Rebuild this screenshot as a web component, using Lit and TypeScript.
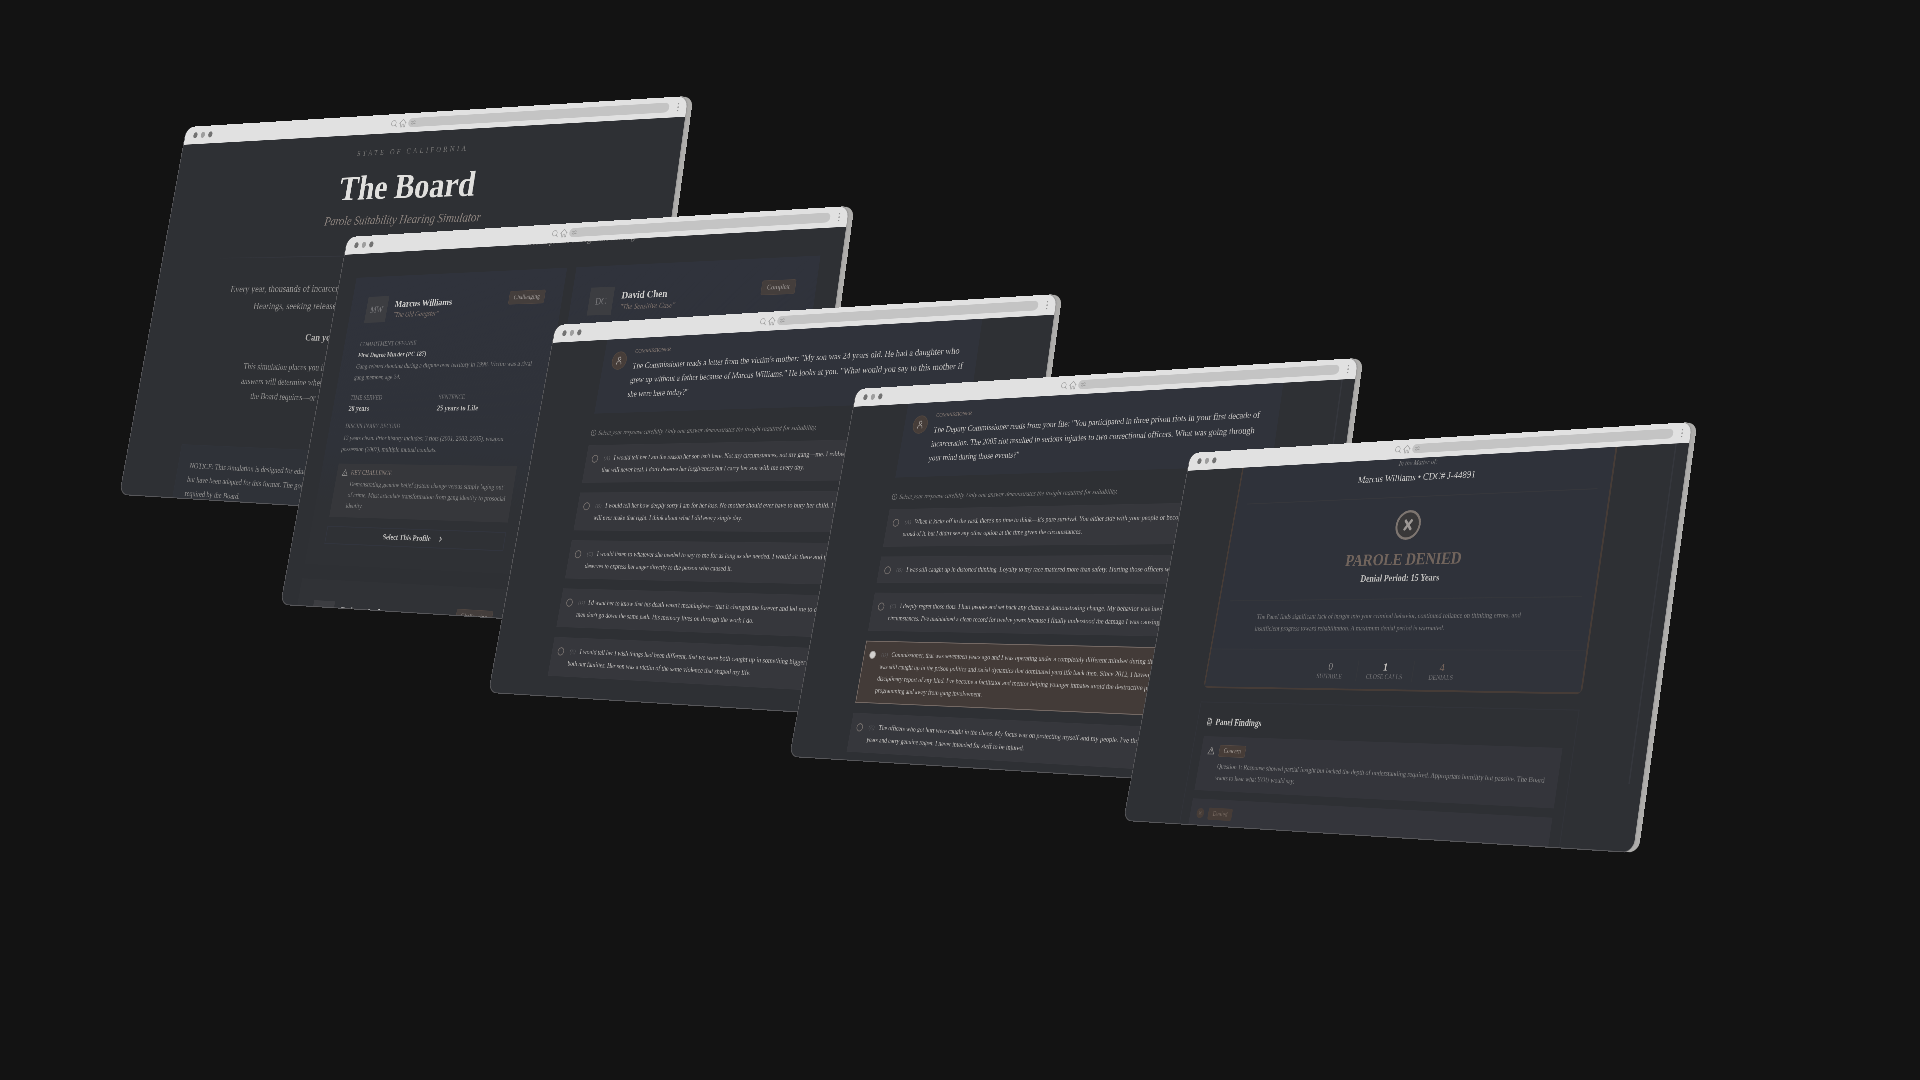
import { LitElement, html, svg, css, nothing } from "lit";
import { customElement, property } from "lit/decorators.js";

type Point = [number, number];

interface Choice {
  letter: string;
  lines: string[];
  selected?: boolean;
}

interface Profile {
  initials: string;
  name: string;
  nickname: string;
  level: string;
  full?: boolean;
}

/* Natural size of every browser window before it is tilted. */
const WINDOW_WIDTH = 1280;
const WINDOW_HEIGHT = 840;

/* Corners of a tilted window, clockwise from the top left. */
const TILT: [Point, Point, Point, Point] = [
  [0, 0],
  [501, -31],
  [442, 399],
  [-67, 367],
];

/* Projects the window rectangle onto the four corners. */
function project([p0, p1, p2, p3]: [Point, Point, Point, Point]): string {
  const dx1 = p1[0] - p2[0];
  const dx2 = p3[0] - p2[0];
  const sx = p0[0] - p1[0] + p2[0] - p3[0];
  const dy1 = p1[1] - p2[1];
  const dy2 = p3[1] - p2[1];
  const sy = p0[1] - p1[1] + p2[1] - p3[1];
  const det = dx1 * dy2 - dx2 * dy1;
  const g = (sx * dy2 - dx2 * sy) / det;
  const h = (dx1 * sy - sx * dy1) / det;
  const a = p1[0] - p0[0] + g * p1[0];
  const b = p3[0] - p0[0] + h * p3[0];
  const d = p1[1] - p0[1] + g * p1[1];
  const e = p3[1] - p0[1] + h * p3[1];
  const w = WINDOW_WIDTH;
  const t = WINDOW_HEIGHT;
  return `matrix3d(${[
    a / w, d / w, 0, g / w,
    b / t, e / t, 0, h / t,
    0, 0, 1, 0,
    p0[0], p0[1], 0, 1,
  ].join(",")})`;
}

const TILT_MATRIX = project(TILT);

/* Where each window's top left corner sits on a 1920 x 1080 stage. */
const PLACES: Point[] = [
  [187, 127],
  [348, 237],
  [556, 325],
  [857, 389],
  [1191, 453],
];

const rows = (lines: string[]) => lines.map((line) => html`<span class="row">${line}</span>`);

const icon = (body: unknown, size = 18) => html`<svg
  class="icon"
  width=${size}
  height=${size}
  viewBox="0 0 24 24"
  fill="none"
  stroke="currentColor"
  stroke-width="2"
  stroke-linecap="round"
  stroke-linejoin="round"
  aria-hidden="true"
>${body}</svg>`;

const SEARCH = svg`<circle cx="11" cy="11" r="8"/><path d="M17 17l5 5"/>`;
const HOME = svg`<path d="M2 12L12 2l10 10M5 10v12h5v-7h4v7h5V10"/>`;
const TUNE = svg`<path d="M3 8h10M19 8h2M3 16h2M11 16h10"/><circle cx="16" cy="8" r="3"/><circle cx="8" cy="16" r="3"/>`;
const PERSON = svg`<circle cx="12" cy="7" r="4"/><path d="M5 21v-1a7 7 0 0 1 14 0v1"/>`;
const WARNING = svg`<path d="M12 3L2 21h20L12 3zM12 10v5M12 18v.1"/>`;
const INFO = svg`<circle cx="12" cy="12" r="10"/><path d="M12 7v6M12 17v.1"/>`;
const CROSS = svg`<path d="M7 7l10 10M17 7L7 17"/>`;
const SEAL_CROSS = svg`<path stroke-width="4" d="M7 6l10 12M17 6L7 18"/>`;
const DOC = svg`<path d="M14 2H5v20h14V7l-5-5zM14 2v5h5M8 13h8M8 17h8M8 9h2"/>`;
const CHEVRON = svg`<path stroke-width="3" d="M9 5l7 7-7 7"/>`;

const shared = css`
  * {
    box-sizing: border-box;
  }
  p,
  h1,
  h2,
  h3,
  ul,
  dl,
  dd {
    margin: 0;
    padding: 0;
  }
  .row {
    display: block;
    white-space: nowrap;
  }
  .icon {
    display: block;
    flex: none;
  }
`;

@customElement("browser-window")
export class BrowserWindow extends LitElement {
  @property({ type: Boolean, reflect: true }) rail = false;

  static styles = [
    shared,
    css`
      :host {
        display: flex;
        flex-direction: column;
        overflow: hidden;
        border-radius: 22px;
        background: #2e3034;
        color: #8d8c8b;
        box-shadow:
          -1px 2px 0 #57575a,
          -2px 1px 0 #57575a,
          2px 0 0 #9c9b9a,
          4px 0 0 #aaa9a8,
          6px 0 0 #aeadab,
          8px 1px 0 #aeadab,
          10px 1px 0 #aeadab,
          12px 1px 0 #b2b1af;
      }
      .bar {
        flex: none;
        display: flex;
        align-items: center;
        height: 42px;
        padding: 0 17px 0 24px;
        background: #e1e1e1;
        color: #a3a3a3;
      }
      .lights {
        flex: 1;
        display: flex;
        gap: 10px;
      }
      .light {
        width: 12px;
        height: 14px;
        padding: 0;
        border: 0;
        border-radius: 50%;
        background: #727272;
      }
      .light.mid {
        background: #9f9f9f;
      }
      .tools {
        flex: none;
        display: flex;
        align-items: center;
        gap: 4px;
        width: 690px;
      }
      .address {
        flex: 1;
        display: flex;
        align-items: center;
        height: 20px;
        padding: 0 6px;
        border-radius: 10px;
        background: #c4c4c4;
        color: #9d9d9d;
      }
      .field {
        flex: 1;
        min-width: 0;
        height: 16px;
        border: 0;
        padding: 0;
        background: none;
      }
      .more {
        display: flex;
        flex-direction: column;
        gap: 4px;
        margin-left: 14px;
        padding: 0;
        border: 0;
        background: none;
      }
      .dot {
        width: 3px;
        height: 3px;
        border-radius: 50%;
        background: #8b8b8b;
      }
      .view {
        flex: 1;
        min-height: 0;
        overflow: hidden;
      }
      :host([rail]) .view {
        background: linear-gradient(#35373d, #35373d) 1250px 0 / 3px 670px no-repeat;
      }
    `,
  ];

  render() {
    return html`
      <div class="bar">
        <div class="lights">
          <button class="light" aria-label="Close"></button>
          <button class="light mid" aria-label="Minimise"></button>
          <button class="light" aria-label="Maximise"></button>
        </div>
        <div class="tools">
          ${icon(SEARCH, 18)} ${icon(HOME, 20)}
          <div class="address">
            ${icon(TUNE, 14)}
            <input class="field" type="text" aria-label="Address" />
          </div>
          <button class="more" aria-label="Menu">
            <span class="dot"></span><span class="dot"></span><span class="dot"></span>
          </button>
        </div>
      </div>
      <div class="view"><slot></slot></div>
    `;
  }
}

@customElement("intro-page")
export class IntroPage extends LitElement {
  static styles = [
    shared,
    css`
      :host {
        display: block;
        padding: 30px 152px 0;
        text-align: center;
      }
      .eyebrow {
        font-size: 16px;
        line-height: 24px;
        letter-spacing: 6px;
        color: #777675;
      }
      .title {
        margin-top: 20px;
        font-size: 76px;
        line-height: 88px;
        font-weight: 700;
        color: #e0dfdd;
      }
      .subtitle {
        margin-top: 10px;
        font-size: 27px;
        line-height: 36px;
        font-style: italic;
        color: #8b827d;
      }
      .rule {
        height: 2px;
        margin: 58px 0 50px;
        border: 0;
        background: linear-gradient(90deg, transparent, #34363d 20%, #34363d 80%, transparent);
      }
      .lead {
        font-size: 22px;
        line-height: 38px;
        color: #969493;
      }
      .question {
        margin: 33px 0;
        font-size: 22px;
        line-height: 32px;
        font-weight: 700;
        color: #b3b1af;
      }
      .detail {
        font-size: 19px;
        line-height: 32px;
        color: #929190;
      }
      .notice {
        margin-top: 94px;
        padding: 30px 32px;
        border: 1px solid #30333a;
        background: #2f3238;
        font-size: 17px;
        line-height: 30px;
        text-align: left;
        color: #929190;
      }
    `,
  ];

  render() {
    return html`
      <p class="eyebrow">STATE OF CALIFORNIA</p>
      <h1 class="title">The Board</h1>
      <p class="subtitle">Parole Suitability Hearing Simulator</p>
      <hr class="rule" />
      <p class="lead">
        ${rows([
          "Every year, thousands of incarcerated individuals in California appear before the Board of Parole",
          "Hearings, seeking release. Most of them are denied, often for reasons never said.",
        ])}
      </p>
      <p class="question">Can you find the words they need to hear?</p>
      <p class="detail">
        ${rows([
          "This simulation places you in the hearing room. You will face a series of five questions. Your",
          "answers will determine whether you demonstrate the insight, remorse and accountability that",
          "the Board requires—or whether you are sent back to your cell for another few years.",
        ])}
      </p>
      <p class="notice">
        ${rows([
          "NOTICE: This simulation is designed for educational purposes. The scenarios are based on hearings",
          "but have been adapted for this format. The goal is to teach the kind of insight that is",
          "required by the Board.",
        ])}
      </p>
    `;
  }
}

@customElement("profiles-page")
export class ProfilesPage extends LitElement {
  static styles = [
    shared,
    css`
      :host {
        display: block;
        padding: 0 48px;
      }
      .hint {
        margin: -20px 0 48px;
        font-size: 20px;
        line-height: 28px;
        text-align: center;
      }
      .grid {
        display: grid;
        grid-template-columns: 1fr 1fr;
        gap: 32px 24px;
      }
      .card {
        padding: 46px;
        background: linear-gradient(#30333c, #2f3239 60%, #2f3135 80%);
      }
      .card:nth-child(n + 3) {
        background: #303236;
      }
      .head {
        display: flex;
        align-items: center;
        gap: 20px;
      }
      .avatar {
        display: grid;
        place-items: center;
        width: 60px;
        height: 60px;
        background: #3c3d41;
        font-size: 20px;
        color: #77777a;
      }
      .who {
        flex: 1;
      }
      .name {
        font-size: 22px;
        line-height: 28px;
        font-weight: 700;
        color: #cfcecc;
      }
      .nickname {
        font-size: 16px;
        line-height: 22px;
        font-style: italic;
        color: #7d716b;
      }
      .badge {
        align-self: flex-start;
        padding: 0 12px;
        border: 1px solid #4f4540;
        border-radius: 4px;
        background: #443e3c;
        font-size: 14px;
        line-height: 28px;
        color: #9a9593;
      }
      .label {
        font-size: 14px;
        line-height: 20px;
        font-weight: 400;
        color: #757577;
      }
      .offense {
        margin-top: 40px;
      }
      .strong {
        font-size: 15px;
        line-height: 28px;
        font-weight: 700;
        color: #bdbcba;
      }
      .text {
        font-size: 15px;
        line-height: 25px;
        color: #858585;
      }
      .facts {
        display: grid;
        grid-template-columns: 1fr 1fr;
        gap: 10px;
        margin: 24px 0 16px;
      }
      .value {
        font-size: 17px;
      }
      .record {
        margin-top: 4px;
      }
      .challenge {
        margin: 20px 0;
        padding: 10px 12px 14px 14px;
        background: #36373b;
      }
      .caption {
        display: flex;
        align-items: center;
        gap: 8px;
        margin-bottom: 3px;
      }
      .challenge .label {
        color: #8f847e;
      }
      .challenge .text {
        padding-left: 28px;
        line-height: 24px;
      }
      .choose {
        display: flex;
        align-items: center;
        justify-content: center;
        gap: 18px;
        width: 100%;
        height: 40px;
        border: 2px solid #32353e;
        background: none;
        font: inherit;
        font-size: 17px;
        font-weight: 700;
        color: #bebdbb;
      }
    `,
  ];

  private profiles: Profile[] = [
    { initials: "MW", name: "Marcus Williams", nickname: "The Old Gangster", level: "Challenging", full: true },
    { initials: "DC", name: "David Chen", nickname: "The Sensitive Case", level: "Complex" },
    { initials: "RJ", name: "Robert Jackson", nickname: "The Long Road", level: "Challenging" },
  ];

  private details() {
    return html`
      <h3 class="label offense">COMMITMENT OFFENSE</h3>
      <p class="strong">First Degree Murder (PC 187)</p>
      <p class="text">
        ${rows([
          "Gang-related shooting during a dispute over territory in 1998. Victim was a rival",
          "gang member, age 24.",
        ])}
      </p>
      <dl class="facts">
        <div>
          <dt class="label">TIME SERVED</dt>
          <dd class="strong value">28 years</dd>
        </div>
        <div>
          <dt class="label">SENTENCE</dt>
          <dd class="strong value">25 years to Life</dd>
        </div>
      </dl>
      <h3 class="label">DISCIPLINARY RECORD</h3>
      <p class="text record">
        ${rows([
          "12 years clean. Prior history includes: 3 riots (2001, 2003, 2005), weapon",
          "possession (2007), multiple mutual combats.",
        ])}
      </p>
      <div class="challenge">
        <div class="caption">${icon(WARNING, 18)}<h3 class="label">KEY CHALLENGE</h3></div>
        <p class="text">
          ${rows([
            "Demonstrating genuine belief system change versus simply 'aging out'",
            "of crime. Must articulate transformation from gang identity to prosocial",
            "identity.",
          ])}
        </p>
      </div>
      <button class="choose">Select This Profile ${icon(CHEVRON, 16)}</button>
    `;
  }

  render() {
    return html`
      <p class="hint">Choose a profile to begin the hearing</p>
      <div class="grid">
        ${this.profiles.map(
          (p) => html`
            <article class="card">
              <div class="head">
                <span class="avatar">${p.initials}</span>
                <div class="who">
                  <h2 class="name">${p.name}</h2>
                  <p class="nickname">"${p.nickname}"</p>
                </div>
                <span class="badge">${p.level}</span>
              </div>
              ${p.full ? this.details() : nothing}
            </article>
          `,
        )}
      </div>
    `;
  }
}

@customElement("question-page")
export class QuestionPage extends LitElement {
  @property({ attribute: false }) message: string[] = [];
  @property({ attribute: false }) choices: Choice[] = [];

  static styles = [
    shared,
    css`
      :host {
        display: block;
        padding: 0 160px;
      }
      .message {
        display: flex;
        gap: 20px;
        padding: 21px 24px 26px;
        background: #30333b;
      }
      .avatar {
        flex: none;
        display: grid;
        place-items: center;
        width: 42px;
        height: 42px;
        margin-top: 8px;
        border: 2px solid #51463f;
        border-radius: 50%;
        background: #463d39;
        color: #a5a09d;
      }
      .speaker {
        margin-bottom: 9px;
        font-size: 13px;
        line-height: 18px;
        color: #8a7d76;
      }
      .speech {
        font-size: 19px;
        line-height: 32px;
        color: #c6c4c2;
      }
      .hint {
        display: flex;
        align-items: center;
        gap: 6px;
        margin: 32px 0 16px;
        font-size: 15px;
        line-height: 24px;
        font-style: italic;
        color: #858484;
      }
      .choices {
        display: flex;
        flex-direction: column;
        gap: 22px;
        margin: 0;
        padding: 0;
        border: 0;
      }
      .choice {
        display: flex;
        gap: 16px;
        padding: 15px;
        border: 1px solid #37383d;
        background: #36373c;
        overflow: hidden;
      }
      .choice.selected {
        border: 2px solid #746964;
        padding: 14px;
        background: #433b38;
      }
      .radio {
        appearance: none;
        flex: none;
        width: 18px;
        height: 18px;
        margin: 6px 0 0;
        border: 2px solid #77716e;
        border-radius: 50%;
      }
      .radio:checked {
        border-color: #a5a19e;
        background: #d2d0ce;
      }
      .answer {
        font-size: 15px;
        line-height: 26px;
        color: #bcbab8;
      }
      .letter {
        display: inline-block;
        width: 28px;
        font-size: 13px;
        color: #626265;
      }
    `,
  ];

  render() {
    return html`
      <section class="message">
        <span class="avatar">${icon(PERSON, 22)}</span>
        <div>
          <p class="speaker">COMMISSIONER</p>
          <p class="speech">${rows(this.message)}</p>
        </div>
      </section>
      <p class="hint">
        ${icon(INFO, 16)} Select your response carefully. Only one answer demonstrates the insight
        required for suitability.
      </p>
      <fieldset class="choices" aria-label="Responses">
        ${this.choices.map(
          (c) => html`
            <label class="choice ${c.selected ? "selected" : ""}">
              <input class="radio" type="radio" name="answer" ?checked=${c.selected} />
              <span class="answer">
                ${c.lines.map(
                  (line, i) => html`<span class="row"
                    >${i === 0 ? html`<span class="letter">(${c.letter})</span>` : nothing}${line}</span
                  >`,
                )}
              </span>
            </label>
          `,
        )}
      </fieldset>
    `;
  }
}

@customElement("verdict-page")
export class VerdictPage extends LitElement {
  static styles = [
    shared,
    css`
      :host {
        display: block;
        padding: 0 160px;
      }
      .verdict {
        display: flex;
        flex-direction: column;
        align-items: center;
        border: 4px solid #463c37;
        border-top: 0;
        border-radius: 0 0 14px 14px;
        background: #2f323a;
      }
      .matter {
        font-size: 15px;
        line-height: 20px;
        font-style: italic;
        color: #7d7d7f;
      }
      .name {
        margin-top: 6px;
        font-size: 22px;
        line-height: 32px;
        font-weight: 400;
        color: #cccbc9;
      }
      .rule {
        width: 896px;
        height: 2px;
        margin: 26px 0 28px;
        border: 0;
        background: #36373c;
      }
      .seal {
        display: grid;
        place-items: center;
        width: 64px;
        height: 64px;
        border: 5px solid #7d7570;
        border-radius: 50%;
        background: #393839;
        color: #9c9794;
      }
      .outcome {
        margin-top: 20px;
        font-size: 36px;
        line-height: 44px;
        font-weight: 700;
        color: #71645c;
      }
      .period {
        margin-top: 4px;
        font-size: 20px;
        line-height: 28px;
        font-weight: 700;
        color: #bfbebc;
      }
      .rule.low {
        margin: 30px 0 22px;
        background: #34363b;
      }
      .reason {
        width: 728px;
        font-size: 15px;
        line-height: 26px;
        color: #7b7b7c;
      }
      .stats {
        display: flex;
        align-self: stretch;
        justify-content: center;
        margin-top: 32px;
        padding: 22px 0 16px;
        border-top: 2px solid #33353b;
        background: #30333a;
      }
      .stat {
        display: flex;
        flex-direction: column;
        align-items: center;
        width: 142px;
        border-left: 2px solid #34363b;
      }
      .stat:first-child {
        border-left-color: transparent;
      }
      .count {
        font-size: 24px;
        line-height: 26px;
        color: #8a8887;
      }
      .count.close {
        font-weight: 700;
        color: #c6c2be;
      }
      .count.bad {
        color: #7d6a5f;
      }
      .tag {
        font-size: 14px;
        line-height: 18px;
        color: #707073;
      }
      .findings {
        margin-top: 30px;
        padding: 28px 24px;
        border: 2px solid #313339;
        border-bottom: 0;
      }
      .heading {
        display: flex;
        align-items: center;
        gap: 8px;
        font-size: 20px;
        line-height: 28px;
        font-weight: 700;
        color: #c3c2c0;
      }
      .finding {
        margin-top: 18px;
        padding: 18px 18px 16px;
        background: #34353b;
      }
      .top {
        display: flex;
        align-items: center;
        gap: 12px;
        color: #92908e;
      }
      .badge {
        padding: 0 12px;
        border: 1px solid #554a44;
        border-radius: 4px;
        background: #463c37;
        font-size: 14px;
        line-height: 24px;
        color: #98908b;
      }
      .badge.dim {
        border-color: #463c37;
        color: #74675f;
      }
      .round {
        display: grid;
        place-items: center;
        width: 20px;
        height: 22px;
        border-radius: 10px;
        background: #463c37;
        color: #7f736b;
      }
      .note {
        margin: 8px 0 0 34px;
        font-size: 15px;
        line-height: 25px;
        color: #838384;
      }
    `,
  ];

  render() {
    return html`
      <section class="verdict">
        <p class="matter">In the Matter of:</p>
        <h2 class="name">Marcus Williams • CDC# J-44891</h2>
        <hr class="rule" />
        <span class="seal">${icon(SEAL_CROSS, 36)}</span>
        <p class="outcome">PAROLE DENIED</p>
        <p class="period">Denial Period: 15 Years</p>
        <hr class="rule low" />
        <p class="reason">
          ${rows([
            "The Panel finds significant lack of insight into your criminal behavior, continued reliance on thinking errors, and",
            "insufficient progress toward rehabilitation. A maximum denial period is warranted.",
          ])}
        </p>
        <div class="stats">
          <div class="stat"><span class="count">0</span><span class="tag">SUITABLE</span></div>
          <div class="stat"><span class="count close">1</span><span class="tag">CLOSE CALLS</span></div>
          <div class="stat"><span class="count bad">4</span><span class="tag">DENIALS</span></div>
        </div>
      </section>
      <section class="findings">
        <h2 class="heading">${icon(DOC, 18)} Panel Findings</h2>
        <article class="finding">
          <div class="top">${icon(WARNING, 20)}<span class="badge">Concern</span></div>
          <p class="note">
            ${rows([
              "Question 1: Response showed partial insight but lacked the depth of understanding required. Appropriate humility but passive. The Board",
              "wants to hear what YOU would say.",
            ])}
          </p>
        </article>
        <article class="finding">
          <div class="top">
            <span class="round">${icon(CROSS, 14)}</span><span class="badge dim">Denied</span>
          </div>
          <p class="note">Question 2: Response did not show insight.</p>
        </article>
      </section>
    `;
  }
}

const MOTHER_MESSAGE = [
  "The Commissioner reads a letter from the victim's mother: \"My son was 24 years old. He had a daughter who",
  "grew up without a father because of Marcus Williams.\" He looks at you. \"What would you say to this mother if",
  "she were here today?\"",
];

const MOTHER_CHOICES: Choice[] = [
  {
    letter: "A",
    lines: [
      "I would tell her I am the reason her son isn't here. Not my circumstances, not my gang—me. I robbed her of a future",
      "that will never heal. I don't deserve her forgiveness but I carry her son with me every day.",
    ],
  },
  {
    letter: "B",
    lines: [
      "I would tell her how deeply sorry I am for her loss. No mother should ever have to bury her child. I took him and nothing",
      "will ever make that right. I think about what I did every single day.",
    ],
  },
  {
    letter: "C",
    lines: [
      "I would listen to whatever she needed to say to me for as long as she needed. I would sit there and take it because she",
      "deserves to express her anger directly to the person who caused it.",
    ],
  },
  {
    letter: "D",
    lines: [
      "I'd want her to know that his death wasn't meaningless—that it changed me forever and led me to dedicate my life so young",
      "men don't go down the same path. His memory lives on through the work I do.",
    ],
  },
  {
    letter: "E",
    lines: [
      "I would tell her I wish things had been different, that we were both caught up in something bigger than us that hurt",
      "both our families. Her son was a victim of the same violence that shaped my life.",
    ],
  },
];

const RIOT_MESSAGE = [
  "The Deputy Commissioner reads from your file: \"You participated in three prison riots in your first decade of",
  "incarceration. The 2005 riot resulted in serious injuries to two correctional officers. What was going through",
  "your mind during those events?\"",
];

const RIOT_CHOICES: Choice[] = [
  {
    letter: "A",
    lines: [
      "When it kicks off in the yard, there's no time to think—it's pure survival. You either side with your people or become a target. I'm not",
      "proud of it, but I didn't see any other option at the time given the circumstances.",
    ],
  },
  {
    letter: "B",
    lines: [
      "I was still caught up in distorted thinking. Loyalty to my race mattered more than safety. Hurting those officers was inexcusable.",
    ],
  },
  {
    letter: "C",
    lines: [
      "I deeply regret those riots. I hurt people and set back any chance at demonstrating change. My behavior was inexcusable under any",
      "circumstances. I've maintained a clean record for twelve years because I finally understood the damage I was causing.",
    ],
  },
  {
    letter: "D",
    selected: true,
    lines: [
      "Commissioner, that was seventeen years ago and I was operating under a completely different mindset during that period. I",
      "was still caught up in the prison politics and racial dynamics that dominated yard life back then. Since 2012, I haven't had a single",
      "disciplinary report of any kind. I've become a facilitator and mentor helping younger inmates avoid the destructive path I took, with",
      "programming and away from gang involvement.",
    ],
  },
  {
    letter: "E",
    lines: [
      "The officers who got hurt were caught in the chaos. My focus was on protecting myself and my people. I've thought about it for",
      "years and carry genuine regret. I never intended for staff to be injured.",
    ],
  },
];

@customElement("app-root")
export class AppRoot extends LitElement {
  static styles = css`
    :host {
      display: block;
      min-height: 100vh;
      background: #131313;
      font-family: "Liberation Serif", "Times New Roman", serif;
    }
    .stage {
      position: relative;
      height: 100vh;
      min-height: 880px;
      overflow: hidden;
    }
    .window {
      position: absolute;
      width: 1280px;
      height: 840px;
      transform-origin: 0 0;
    }
  `;

  private pages = [
    html`<intro-page></intro-page>`,
    html`<profiles-page></profiles-page>`,
    html`<question-page .message=${MOTHER_MESSAGE} .choices=${MOTHER_CHOICES}></question-page>`,
    html`<question-page .message=${RIOT_MESSAGE} .choices=${RIOT_CHOICES}></question-page>`,
    html`<verdict-page></verdict-page>`,
  ];

  render() {
    return html`
      <main class="stage">
        ${this.pages.map((page, i) => {
          const [x, y] = PLACES[i];
          const place = `left:${(x / 1920) * 100}%;top:${(y / 1080) * 100}%;transform:${TILT_MATRIX}`;
          return html`<browser-window class="window" style=${place} ?rail=${i > 2}>${page}</browser-window>`;
        })}
      </main>
    `;
  }
}
